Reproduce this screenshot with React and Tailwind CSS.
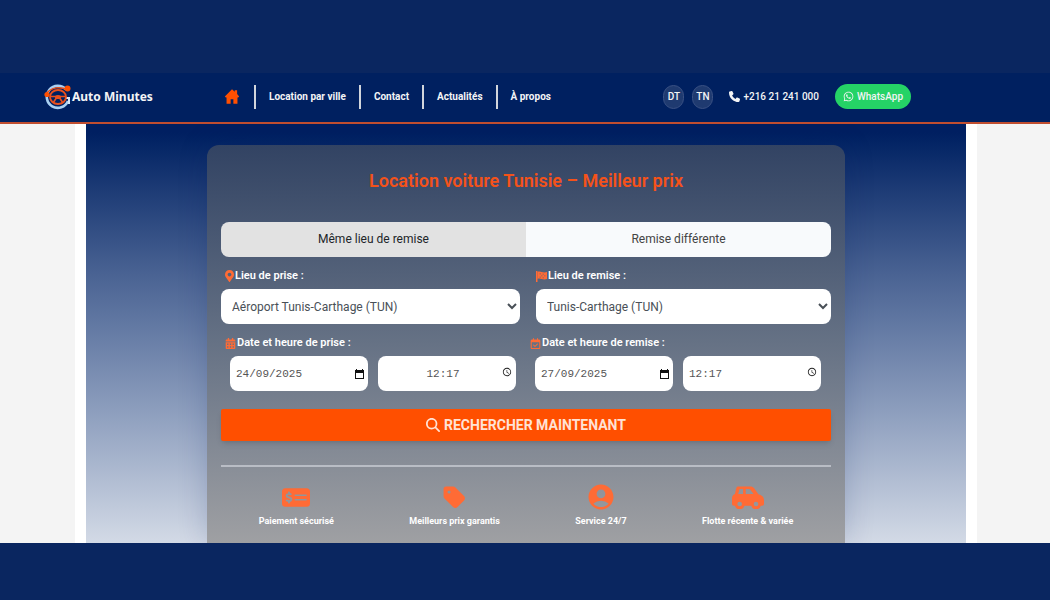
import { useState } from "react";
import {
  FaCalendarAlt,
  FaMapMarkerAlt,
  FaWhatsapp,
} from "react-icons/fa";
import {
  FaMagnifyingGlass,
  FaMoneyCheckDollar,
  FaPhone,
  FaRegCalendarCheck,
  FaTag,
} from "react-icons/fa6";
import {
  MdAccessTime,
  MdAccountCircle,
} from "react-icons/md";

const App = () => {
  return (
    <div className="min-h-screen bg-[#0a2660] pt-[73px] font-[Roboto,sans-serif]">
      <Header />
      <main className="bg-[#f4f4f4]">
        <div className="mr-[73px] ml-[75px] bg-white px-[11px]">
          <div className="overflow-hidden bg-linear-to-b from-[#001f61] from-2% via-[#4a6393] via-36% to-[#d3dae6] px-[121px] pt-[21px]">
            <SearchCard />
          </div>
        </div>
      </main>
    </div>
  );
};

export default App;

const navLinks = [
  "Location par ville",
  "Contact",
  "Actualités",
  "À propos",
];

const Header = () => {
  return (
    <header className="flex h-[51px] items-center border-b-2 border-[#c04e30] bg-[#002060] pr-[139px] pb-0.5 pl-11 text-gray-100">
      <a href="#" className="flex w-[180px] items-center">
        <Logo />
        <span className="font-['Noto_Sans',sans-serif] text-xs font-bold">
          Auto Minutes
        </span>
      </a>

      <nav className="flex items-center text-[10px] font-bold">
        <a href="#" aria-label="Accueil" className="pr-[14px]">
          <HomeIcon />
        </a>
        {navLinks.map((link) => (
          <a
            key={link}
            href="#"
            className="h-6 border-l-2 border-gray-300 px-[13px] leading-6"
          >
            {link}
          </a>
        ))}
      </nav>

      <div className="ml-auto flex items-center text-[10px] font-medium">
        <button className="mr-2 h-6 w-[21px] rounded-full border border-[#3a5184] bg-[#1f3a70]">
          DT
        </button>
        <button className="mr-4 h-6 w-[21px] rounded-full border border-[#3a5184] bg-[#1f3a70]">
          TN
        </button>
        <a href="#" className="mr-4 flex items-center gap-[3px]">
          <FaPhone className="size-[11px]" />
          +216 21 241 000
        </a>
        <a
          href="#"
          className="flex h-[25px] items-center gap-[3px] rounded-full bg-[#25d366] px-2"
        >
          <FaWhatsapp className="size-[11px]" />
          WhatsApp
        </a>
      </div>
    </header>
  );
};

const SearchCard = () => {
  const [sameReturn, setSameReturn] = useState(true);

  return (
    <form
      onSubmit={(e) => e.preventDefault()}
      className="rounded-t-xl bg-linear-to-b from-[#324363] via-[#667285] via-50% to-[#9fa0a3] px-[14px] pt-6 pb-4 shadow-[0_0_30px_rgba(0,32,96,0.2)]"
    >
      <h1 className="text-center text-lg leading-6 font-semibold text-[#f4521a]">
        Location voiture Tunisie – Meilleur prix
      </h1>

      {/* Return mode */}
      <div className="mt-[29px] grid h-[35px] grid-cols-2 overflow-hidden rounded-lg text-xs">
        <button
          type="button"
          onClick={() => setSameReturn(true)}
          className={`pb-0.5 ${
            sameReturn
              ? "bg-[#e2e2e2] text-[#212529]"
              : "bg-[#f8fafc] text-[#444]"
          }`}
        >
          Même lieu de remise
        </button>
        <button
          type="button"
          onClick={() => setSameReturn(false)}
          className={`pb-0.5 ${
            sameReturn
              ? "bg-[#f8fafc] text-[#444]"
              : "bg-[#e2e2e2] text-[#212529]"
          }`}
        >
          Remise différente
        </button>
      </div>

      {/* Places */}
      <div className="mt-2 grid grid-cols-[299fr_295fr] gap-4">
        <div>
          <FieldLabel
            htmlFor="pickup"
            icon={<FaMapMarkerAlt className="h-3 w-[9px]" />}
          >
            Lieu de prise :
          </FieldLabel>
          <PlaceSelect
            id="pickup"
            option="Aéroport Tunis-Carthage (TUN)"
          />
        </div>
        <div>
          <FieldLabel
            htmlFor="return"
            icon={<FlagIcon />}
            flush
          >
            Lieu de remise :
          </FieldLabel>
          <PlaceSelect
            id="return"
            option="Tunis-Carthage (TUN)"
          />
        </div>
      </div>

      {/* Dates */}
      <div className="mt-2 grid grid-cols-2">
        <div>
          <FieldLabel
            htmlFor="pickup-date"
            icon={<FaCalendarAlt className="size-[11px]" />}
          >
            Date et heure de prise :
          </FieldLabel>
          <div className="grid grid-cols-2 gap-[10px] pr-[10px] pl-[9px]">
            <DateInput id="pickup-date" value="24/09/2025" />
            <TimeInput
              label="Heure de prise"
              value="12:17"
              centered
            />
          </div>
        </div>
        <div>
          <FieldLabel
            htmlFor="return-date"
            icon={<FaRegCalendarCheck className="size-[11px]" />}
          >
            Date et heure de remise :
          </FieldLabel>
          <div className="grid grid-cols-2 gap-[10px] pr-[10px] pl-[9px]">
            <DateInput id="return-date" value="27/09/2025" />
            <TimeInput label="Heure de remise" value="12:17" />
          </div>
        </div>
      </div>

      <button
        type="submit"
        className="mt-[18px] flex h-8 w-full items-center justify-center gap-1 rounded-xs bg-[#ff4f00] text-sm font-bold text-[#ffe2d5] shadow-md"
      >
        <FaMagnifyingGlass className="size-[14px]" />
        RECHERCHER MAINTENANT
      </button>

      <hr className="mt-6 border-t-2 border-[#b9bdc5]" />

      <ul className="mt-4 flex justify-around text-[9px] leading-3 font-bold text-white">
        <Feature label="Paiement sécurisé">
          <FaMoneyCheckDollar className="h-[25px] w-7" />
        </Feature>
        <Feature label="Meilleurs prix garantis">
          <FaTag className="size-[25px]" />
        </Feature>
        <Feature label="Service 24/7">
          <MdAccountCircle className="size-[30px]" />
        </Feature>
        <Feature label="Flotte récente & variée">
          <CarIcon />
        </Feature>
      </ul>
    </form>
  );
};

const Feature = ({ label, children }) => {
  return (
    <li className="flex flex-col items-center gap-1">
      <div className="flex h-7 items-center text-[#ff6b35]">
        {children}
      </div>
      {label}
    </li>
  );
};

const FieldLabel = ({ htmlFor, icon, flush, children }) => {
  return (
    <label
      htmlFor={htmlFor}
      className={`mb-0.5 flex h-[22px] items-center gap-px text-[11px] font-semibold text-white ${
        flush ? "" : "pl-1"
      }`}
    >
      <span className="text-[#ff6b35]">{icon}</span>
      {children}
    </label>
  );
};

const PlaceSelect = ({ id, option }) => {
  return (
    <select
      id={id}
      className="h-[35px] w-full rounded-lg bg-white pl-[7px] text-xs text-[#495057]"
    >
      <option>{option}</option>
    </select>
  );
};

const DateInput = ({ id, value }) => {
  return (
    <div className="flex h-[35px] items-center rounded-lg bg-white pr-1 pl-1.5">
      <input
        id={id}
        type="text"
        defaultValue={value}
        className="w-full min-w-0 pt-px font-['Liberation_Mono',monospace] text-[11px] text-[#555]"
      />
      <svg viewBox="0 0 9 10" className="h-[10px] w-[9px] shrink-0">
        <path
          d="M1 0h1v1h5V0h1v1h1v9H0V1h1zM1 4v5h7V4z"
          fill="#111"
          fillRule="evenodd"
        />
      </svg>
    </div>
  );
};

const TimeInput = ({ label, value, centered }) => {
  return (
    <div className="flex h-[35px] items-center rounded-lg bg-white pr-1 pl-1.5">
      <input
        type="text"
        aria-label={label}
        defaultValue={value}
        className={`w-full min-w-0 pt-px font-['Liberation_Mono',monospace] text-[11px] text-[#555] ${
          centered ? "text-center" : ""
        }`}
      />
      <MdAccessTime className="mb-1 size-[10px] shrink-0 text-[#222]" />
    </div>
  );
};

const HomeIcon = () => {
  return (
    <svg viewBox="0 0 42 44" className="h-[15px] w-4" fill="#ff4f00">
      <path d="M21 1l8 7V4h7v11l6 7-3 3h-2v18H25V30h-8v13H5V25H3l-3-3z" />
    </svg>
  );
};

const FlagIcon = () => {
  return (
    <svg
      viewBox="0 0 22 22"
      className="size-[11px]"
      fill="currentColor"
    >
      <path d="M0 0h3v22H0z" />
      <path d="M3 2c6-3 10 3 19 0v14c-9 3-13-3-19 0z" />
      <path
        d="M7 4h3v3H7zM13 5h3v3h-3zM10 8h3v3h-3zM16 8h3v3h-3zM7 11h3v3H7zM13 12h3v3h-3z"
        fill="#56637c"
        opacity="0.4"
      />
    </svg>
  );
};

const CarIcon = () => {
  return (
    <svg
      viewBox="0 0 98 70"
      className="h-[23px] w-8"
      fill="currentColor"
      fillRule="evenodd"
    >
      <path d="M20 1h36c5 0 9 2 12 6l13 18c10 3 17 8 17 18v10c0 4-2 7-6 7h-4a15 15 0 0 1-29 0H38a15 15 0 0 1-29 0H6c-4 0-6-3-6-7V37c0-7 4-11 9-13l4-17c1-4 3-6 7-6zM23 9l-4 15h15V9zM42 9v15h24L56 11c-1-1-2-2-4-2zM23 48a7 7 0 1 0 1 14 7 7 0 0 0-1-14zM73 48a7 7 0 1 0 1 14 7 7 0 0 0-1-14z" />
    </svg>
  );
};

// Steering wheel inside a G-shaped ring
const Logo = () => {
  return (
    <svg viewBox="0 0 28 26" className="h-[26px] w-7" fill="none">
      <path
        d="M22 5.5A11 11 0 1 0 24 17"
        stroke="#a9d0f2"
        strokeWidth="2.6"
      />
      <path
        d="M21 14h5M25 14v6"
        stroke="#d5e6f7"
        strokeWidth="2"
      />
      <ellipse
        cx="14"
        cy="13"
        rx="8"
        ry="7"
        stroke="#e8501e"
        strokeWidth="1.8"
      />
      <path
        d="M2 10C7 3 17 2 23 6"
        stroke="#e8501e"
        strokeWidth="1.5"
      />
      <path
        d="M6 12.5h16M13 13l-4 6M15 13l4 6"
        stroke="#e8501e"
        strokeWidth="1.6"
      />
      <ellipse cx="14" cy="13" rx="3" ry="2" fill="#e8501e" />
      <circle cx="3" cy="10.5" r="2.6" fill="#ff4f00" />
      <circle cx="23.5" cy="4.5" r="3" fill="#ff4f00" />
    </svg>
  );
};
